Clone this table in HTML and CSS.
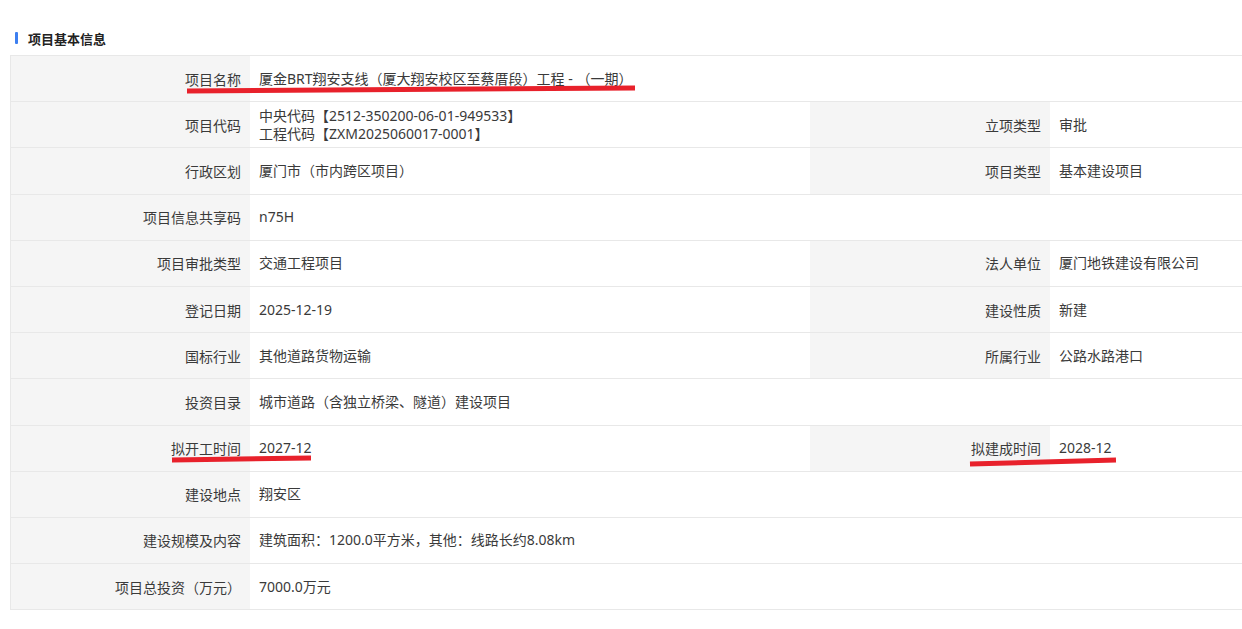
FILE: index.html
```html
<!DOCTYPE html>
<html lang="zh-CN">
<head>
  <meta charset="UTF-8">
  <meta name="viewport" content="width=device-width, initial-scale=1.0">
  <title>项目基本信息</title>
  <link rel="stylesheet" href="styles.css">
</head>
<body>
  <div class="section-title"><span class="bar"></span>项目基本信息</div>

  <div class="info-table">
    <div class="row">
      <div class="label">项目名称</div>
      <div class="value wide">厦金BRT翔安支线（厦大翔安校区至蔡厝段）工程 - （一期）</div>
    </div>
    <div class="row">
      <div class="label">项目代码</div>
      <div class="value">中央代码【2512-350200-06-01-949533】<br>工程代码【ZXM2025060017-0001】</div>
      <div class="label">立项类型</div>
      <div class="value">审批</div>
    </div>
    <div class="row">
      <div class="label">行政区划</div>
      <div class="value">厦门市（市内跨区项目）</div>
      <div class="label">项目类型</div>
      <div class="value">基本建设项目</div>
    </div>
    <div class="row">
      <div class="label">项目信息共享码</div>
      <div class="value wide">n75H</div>
    </div>
    <div class="row">
      <div class="label">项目审批类型</div>
      <div class="value">交通工程项目</div>
      <div class="label">法人单位</div>
      <div class="value">厦门地铁建设有限公司</div>
    </div>
    <div class="row">
      <div class="label">登记日期</div>
      <div class="value">2025-12-19</div>
      <div class="label">建设性质</div>
      <div class="value">新建</div>
    </div>
    <div class="row">
      <div class="label">国标行业</div>
      <div class="value">其他道路货物运输</div>
      <div class="label">所属行业</div>
      <div class="value">公路水路港口</div>
    </div>
    <div class="row">
      <div class="label">投资目录</div>
      <div class="value wide">城市道路（含独立桥梁、隧道）建设项目</div>
    </div>
    <div class="row">
      <div class="label">拟开工时间</div>
      <div class="value">2027-12</div>
      <div class="label">拟建成时间</div>
      <div class="value">2028-12</div>
    </div>
    <div class="row">
      <div class="label">建设地点</div>
      <div class="value wide">翔安区</div>
    </div>
    <div class="row">
      <div class="label">建设规模及内容</div>
      <div class="value wide">建筑面积：1200.0平方米，其他：线路长约8.08km</div>
    </div>
    <div class="row">
      <div class="label">项目总投资（万元）</div>
      <div class="value wide">7000.0万元</div>
    </div>
  </div>

  <!-- hand-drawn red marks over the screenshot -->
  <svg class="marks" width="1242" height="629" viewBox="0 0 1242 629">
    <path d="M187 91 L635 88" />
    <path d="M172 460 L311 458" />
    <path d="M970 464 L1116 460" />
  </svg>
</body>
</html>
```

FILE: styles.css
```css
html, body {
  margin: 0;
  padding: 0;
  overflow: hidden;
}
body {
  background-color: #fff;
  color: #3a3a3a;
  font-family: "Noto Sans", "Noto Sans CJK SC", sans-serif;
  font-size: 14px;
  text-spacing-trim: space-all;
  padding: 28px 0 0 10px;
  position: relative;
  height: 629px;
  box-sizing: border-box;
}
.section-title {
  display: flex;
  align-items: center;
  height: 20px;
  margin: 0 0 7px 5px;
  font-size: 13px;
  font-weight: bold;
  color: #222;
}
.section-title .bar {
  width: 3px;
  height: 12px;
  border-radius: 1px;
  background-color: #3d7ff0;
  margin-right: 10px;
}
.info-table {
  width: 1252px;
  border-top: 1px solid #e8e8e8;
  border-left: 1px solid #e8e8e8;
}
.row {
  display: grid;
  grid-template-columns: 239px 560px 240px 1fr;
  height: 46.2px;
  box-sizing: border-box;
  border-bottom: 1px solid #e8e8e8;
}
.label {
  background-color: #f5f5f5;
  padding-right: 9px;
  display: flex;
  align-items: center;
  justify-content: flex-end;
  white-space: nowrap;
}
.value {
  padding-left: 9px;
  display: flex;
  align-items: center;
  line-height: 18px;
  white-space: nowrap;
}
.value.wide {
  grid-column: span 3;
}
.marks {
  position: absolute;
  left: 0;
  top: 0;
  pointer-events: none;
}
.marks path {
  stroke: #e8212b;
  stroke-width: 5;
  fill: none;
}
```
